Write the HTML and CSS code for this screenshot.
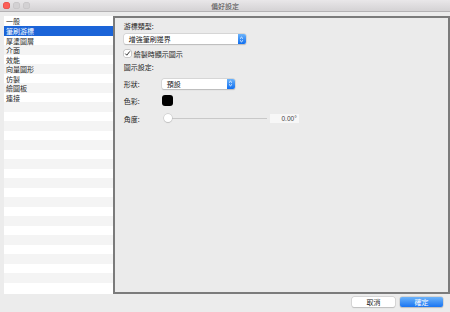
FILE: index.html
```html
<!DOCTYPE html>
<html lang="zh-Hant">
<head>
    <meta charset="UTF-8">
    <title>偏好設定</title>
    <link rel="stylesheet" href="styles.css">
</head>
<body>
    <div class="window">
        <div class="title-bar">
            <div class="lights">
                <span class="light red"></span>
                <span class="light"></span>
                <span class="light"></span>
            </div>
            <span class="title">偏好設定</span>
        </div>

        <div class="main">
            <ul class="side-list">
                <li>一般</li>
                <li class="selected">筆刷游標</li>
                <li>厚塗圖層</li>
                <li>介面</li>
                <li>效能</li>
                <li>向量圖形</li>
                <li>仿製</li>
                <li>繪圖板</li>
                <li>連接</li>
                <li></li><li></li><li></li><li></li><li></li><li></li>
                <li></li><li></li><li></li><li></li><li></li><li></li>
                <li></li><li></li><li></li><li></li><li></li><li></li>
                <li></li><li></li>
            </ul>

            <div class="panel">
                <div class="label">游標類型:</div>
                <div class="popup wide">
                    <span>增強筆刷邊界</span>
                    <span class="popup-arrow">
                        <svg width="5" height="7" viewBox="0 0 5 7"><path d="M1 2.6 L2.5 1.2 L4 2.6 M1 4.4 L2.5 5.8 L4 4.4" fill="none" stroke="#fff" stroke-width="0.9"/></svg>
                    </span>
                </div>
                <label class="check-row">
                    <span class="checkbox">
                        <svg width="7" height="7" viewBox="0 0 7 7"><path d="M1.3 3.6 L2.8 5.2 L5.8 1.4" fill="none" stroke="#333" stroke-width="1"/></svg>
                    </span>
                    繪製時顯示圖示
                </label>
                <div class="label section">圖示設定:</div>

                <div class="field-row shape-row">
                    <span class="field-label">形狀:</span>
                    <div class="popup narrow">
                        <span>預設</span>
                        <span class="popup-arrow">
                            <svg width="5" height="7" viewBox="0 0 5 7"><path d="M1 2.6 L2.5 1.2 L4 2.6 M1 4.4 L2.5 5.8 L4 4.4" fill="none" stroke="#fff" stroke-width="0.9"/></svg>
                        </span>
                    </div>
                </div>
                <div class="field-row color-row">
                    <span class="field-label">色彩:</span>
                    <span class="swatch"></span>
                </div>
                <div class="field-row angle-row">
                    <span class="field-label">角度:</span>
                    <div class="slider">
                        <span class="knob"></span>
                    </div>
                    <span class="num-field">0.00°</span>
                </div>
            </div>
        </div>

        <div class="footer">
            <button class="btn">取消</button>
            <button class="btn primary">確定</button>
        </div>
    </div>
</body>
</html>
```

FILE: styles.css
```css
body {
    margin: 0;
    padding: 0;
    background: #ececec;
    font-family: "Noto Sans CJK TC", "Liberation Sans", sans-serif;
    font-size: 7px;
    color: #222;
}

.window {
    width: 450px;
    height: 312px;
    display: flex;
    flex-direction: column;
    overflow: hidden;
}

.title-bar {
    height: 11px;
    background: linear-gradient(#e9e7e9, #d4d2d4);
    border-bottom: 1px solid #b4b2b4;
    display: flex;
    align-items: center;
    justify-content: center;
    position: relative;
}

.lights {
    position: absolute;
    left: 3px;
    top: 2px;
    display: flex;
    gap: 3px;
}

.light {
    width: 7px;
    height: 7px;
    border-radius: 50%;
    background: #d3d1d3;
    box-shadow: inset 0 0 0 0.5px #c2c0c2;
}

.light.red {
    background: #fc5f57;
    box-shadow: inset 0 0 0 0.5px #e0443e;
}

.title {
    color: #4d4d4d;
    font-size: 7px;
}

.main {
    display: flex;
    padding: 4px 0 0 4px;
    height: 278px;
}

.side-list {
    list-style: none;
    margin: 0;
    padding: 0;
    width: 110px;
    height: 278px;
    overflow: hidden;
    background: #fff;
}

.side-list li {
    height: 9.5px;
    line-height: 10px;
    padding-left: 2px;
    color: #222;
}

.side-list li:first-child {
    height: 10px;
    line-height: 11px;
}

.side-list li:nth-child(even) {
    background: #f4f4f4;
}

.side-list li.selected {
    background: #1b64d8;
    color: #fff;
}

.panel {
    width: 328px;
    height: 274px;
    border: 2px solid #7b7b7b;
    background: #ebebeb;
    padding-left: 9px;
    display: flex;
    flex-direction: column;
    align-items: flex-start;
}

.label {
    margin-top: 3px;
    height: 10px;
    line-height: 10px;
}

.popup {
    height: 10px;
    background: #fff;
    border-radius: 2px;
    box-shadow: 0 0 0 0.5px #c8c8c8, 0 0.5px 1px rgba(0, 0, 0, 0.25);
    display: flex;
    align-items: center;
    justify-content: space-between;
    padding-left: 5px;
    line-height: 10px;
}

.popup.wide {
    width: 117px;
    margin-top: 3px;
}

.popup.narrow {
    width: 68px;
}

.popup-arrow {
    width: 8px;
    height: 10px;
    border-radius: 0 2px 2px 0;
    background: linear-gradient(#6cb3fa, #0f6ef0);
    display: flex;
    align-items: center;
    justify-content: center;
}

.check-row {
    margin-top: 5px;
    height: 9px;
    display: flex;
    align-items: center;
    gap: 3px;
}

.checkbox {
    width: 7px;
    height: 7px;
    background: #fff;
    border-radius: 1.5px;
    box-shadow: 0 0 0 0.5px #a8a8a8;
    display: flex;
}

.section {
    margin-top: 4px;
}

.field-row {
    display: flex;
    align-items: center;
    height: 11px;
}

.field-label {
    width: 38px;
}

.shape-row {
    margin-top: 6px;
}

.color-row {
    margin-top: 6px;
}

.swatch {
    width: 11px;
    height: 11px;
    border-radius: 3px;
    background: #000;
}

.angle-row {
    margin-top: 7px;
}

.slider {
    width: 102px;
    height: 1.5px;
    background: #c8c8c8;
    position: relative;
    margin-left: 3px;
}

.knob {
    position: absolute;
    left: -1px;
    top: -3.5px;
    width: 8px;
    height: 8px;
    border-radius: 50%;
    background: #fff;
    box-shadow: 0 0 0 0.5px #c0c0c0, 0 0.5px 1px rgba(0, 0, 0, 0.3);
}

.num-field {
    margin-left: 3px;
    width: 27px;
    height: 9px;
    line-height: 9px;
    background: #f7f7f7;
    text-align: right;
    padding-right: 2px;
    color: #444;
    font-family: "Liberation Sans", sans-serif;
    font-size: 6.5px;
}

.footer {
    display: flex;
    justify-content: flex-end;
    gap: 5px;
    padding: 3px 7px 0 0;
}

.btn {
    width: 43px;
    height: 10px;
    padding: 0;
    border: none;
    border-radius: 2px;
    background: #fff;
    box-shadow: 0 0 0 0.5px #c4c4c4, 0 0.5px 1px rgba(0, 0, 0, 0.2);
    font-family: "Noto Sans CJK TC", sans-serif;
    font-size: 7px;
    line-height: 10px;
    color: #222;
}

.btn.primary {
    background: linear-gradient(#6cb3fa, #1a75f2);
    color: #fff;
}
```
